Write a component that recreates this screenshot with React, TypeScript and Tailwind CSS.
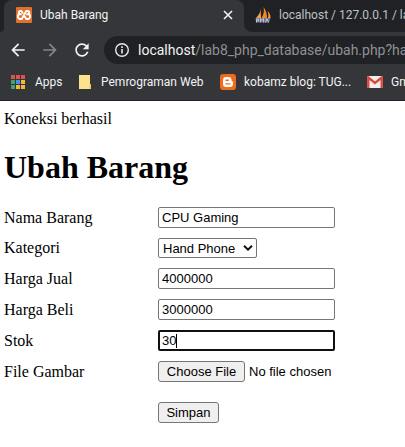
import type { ReactNode } from "react";

const uiFont = "font-['Roboto','Noto_Sans',sans-serif]";
const fieldClass =
  "block h-[21px] w-[177px] rounded-xs border border-[#767676] bg-white px-[3px] text-black outline-none";

function NavIcon({ label, path, dim }: { label: string; path: string; dim?: boolean }) {
  return (
    <button type="button" aria-label={label} className={dim ? "text-[#85868a]" : "text-[#f1f3f4]"}>
      <svg viewBox="0 0 24 24" className="size-5" fill="currentColor">
        <path d={path} />
      </svg>
    </button>
  );
}

function XamppIcon() {
  return (
    <svg viewBox="0 0 16 16" className="size-4 shrink-0">
      <rect width="16" height="16" rx="1" fill="#e0702a" />
      <g fill="none" stroke="#fff" strokeWidth="1.900" strokeLinejoin="round">
        <path d="M7 6.500L5.500 4H4.300a1.600 1.600 0 0 0-.8 3A2.600 2.600 0 0 0 4.500 12h1.300L10.200 4h1.500a1.600 1.600 0 0 1 .8 3 2.600 2.600 0 0 1-1 5h-1.300L8.500 9" />
        <path d="M3.500 7.200h2.200M12.500 7.200h-2.200" />
      </g>
    </svg>
  );
}

function PhpMyAdminIcon() {
  return (
    <svg viewBox="0 0 16 16" className="size-4 shrink-0">
      <path d="M5.500 1.500C5.500 5 4 8 1 11h5z" fill="#f6a440" />
      <path d="M8.500 0C9.500 4 8.500 8 6.500 11H12C12 7 11 3 8.500 0z" fill="#f08a1c" />
      <path d="M12.500 4c1 2 1.200 4.500.5 7h2.500C15.500 8 14.500 5.500 12.500 4z" fill="#f6a440" />
      <path d="M.5 11h15L14 15.500H1z" fill="#6f7290" />
      <path d="M1.500 15.500v-3.500h2v2h-2M5.500 15.500v-4l1.500 2 1.500-2v4M10.500 15.500l1.500-4 1.500 4" fill="none" stroke="#c3c6de" strokeWidth=".9" />
    </svg>
  );
}

const appColors = [
  "#e2504a", "#e2504a", "#e2504a",
  "#3fa073", "#4a90f0", "#f2b93b",
  "#3fa073", "#f2b93b", "#f2b93b",
];

function AppsIcon() {
  return (
    <svg viewBox="0 0 14 14" className="size-[14px] shrink-0">
      {appColors.map((color, i) => (
        <rect key={i} x={(i % 3) * 5} y={Math.floor(i / 3) * 5} width="4" height="4" fill={color} />
      ))}
    </svg>
  );
}

function NoteIcon() {
  return (
    <svg viewBox="0 0 12 15" className="h-[15px] w-3 shrink-0">
      <path d="M0 0h11v9l1 1v4H0z" fill="#fbe38e" />
      <path d="M11 9l1 1v4h-2v-3z" fill="#f4cf5c" />
    </svg>
  );
}

function BloggerIcon() {
  return (
    <svg viewBox="0 0 16 16" className="size-4 shrink-0">
      <rect width="16" height="16" rx="3" fill="#f26a1b" />
      <path
        fillRule="evenodd"
        fill="#fff"
        d="M6 3h2.500A3 3 0 0 1 11.500 6v.5q0 .7.8.7.7 0 .7.800V10a3 3 0 0 1-3 3H6a3 3 0 0 1-3-3V6a3 3 0 0 1 3-3zM6 5.500a.7.7 0 0 0 0 1.400h2.200a.7.7 0 0 0 0-1.400zM6 9.200a.7.7 0 0 0 0 1.400h4a.7.7 0 0 0 0-1.400z"
      />
    </svg>
  );
}

function GmailIcon() {
  return (
    <svg viewBox="0 0 16 12" className="h-3 w-4 shrink-0">
      <rect width="16" height="12" rx="1" fill="#f3eeee" />
      <path d="M1.250 12V1.500L8 7l6.750-5.500V12" fill="none" stroke="#dc4a3f" strokeWidth="2.400" />
    </svg>
  );
}

function Bookmark({ icon, children, className = "" }: { icon: ReactNode; children: ReactNode; className?: string }) {
  return (
    <a href="#" className={`flex shrink-0 items-center whitespace-nowrap ${className}`}>
      {icon}
      <span>{children}</span>
    </a>
  );
}

function BrowserBar() {
  return (
    <header className={`overflow-hidden border-b border-[#222325] bg-[#35363a] text-xs text-[#f1f3f4] ${uiFont}`}>
      <div className="flex h-8">
        <div className="w-1 shrink-0 rounded-br-lg bg-[#202124]" />
        <div className="shrink-0 bg-[#202124] w-60">
          <div className="flex h-8 items-center gap-2 rounded-t-lg bg-[#35363a] pr-2 pb-0.5 pl-3">
            <XamppIcon />
            <span className="flex-1">Ubah Barang</span>
            <button type="button" aria-label="Close tab">
              <svg viewBox="0 0 16 16" className="size-4" stroke="currentColor" strokeWidth="1.600">
                <path d="M4 4l8 8M12 4l-8 8" />
              </svg>
            </button>
          </div>
        </div>
        <div className="flex flex-1 items-center gap-2 overflow-hidden rounded-bl-lg bg-[#202124] pb-0.5 pl-[11px] whitespace-nowrap text-[#bdc1c6]">
          <PhpMyAdminIcon />
          <span>localhost / 127.0.0.1 / lab8</span>
        </div>
      </div>
      <div className="flex h-9 items-center">
        <nav className="flex w-26 shrink-0 items-center gap-3 pl-2">
          <NavIcon label="Back" path="M20 11H7.830l5.590-5.590L12 4l-8 8 8 8 1.410-1.410L7.830 13H20v-2z" />
          <NavIcon label="Forward" dim path="M12 4l-1.410 1.410L16.170 11H4v2h12.170l-5.580 5.590L12 20l8-8z" />
          <NavIcon
            label="Reload"
            path="M17.650 6.350C16.200 4.900 14.210 4 12 4c-4.420 0-7.990 3.580-7.990 8s3.570 8 7.990 8c3.730 0 6.840-2.550 7.730-6h-2.080c-.82 2.330-3.040 4-5.650 4-3.310 0-6-2.690-6-6s2.690-6 6-6c1.660 0 3.140.69 4.220 1.780L13 11h7V4l-2.350 2.350z"
          />
        </nav>
        <div className="flex h-7 flex-1 items-center gap-2 overflow-hidden rounded-l-full bg-[#202124] pl-[10px] text-sm whitespace-nowrap text-[#8e9195]">
          <svg viewBox="0 0 16 16" className="size-4 shrink-0 text-[#e8eaed]" fill="none" stroke="currentColor">
            <circle cx="8" cy="8" r="6.300" strokeWidth="1.400" />
            <path d="M8 7v4.500M8 4.300v1.700" strokeWidth="1.600" />
          </svg>
          <span>
            <span className="text-[#f1f3f4]">localhost</span>/lab8_php_database/ubah.php?hal
          </span>
        </div>
      </div>
      <div className="flex h-8 items-center pb-1 pl-[11px]">
        <Bookmark icon={<AppsIcon />} className="w-17 gap-[10px]">Apps</Bookmark>
        <Bookmark icon={<NoteIcon />} className="w-[141px] gap-[10px]">Pemrograman Web</Bookmark>
        <Bookmark icon={<BloggerIcon />} className="w-[147px] gap-2">kobamz blog: TUG...</Bookmark>
        <Bookmark icon={<GmailIcon />} className="gap-2">Gmail</Bookmark>
      </div>
    </header>
  );
}

function Row({ id, label, children }: { id: string; label: string; children: ReactNode }) {
  return (
    <div className="flex items-center">
      <label htmlFor={id} className="w-[154px] shrink-0 font-['Liberation_Serif',serif] text-base leading-5">
        {label}
      </label>
      {children}
    </div>
  );
}

export default function App() {
  return (
    <div className="min-h-screen overflow-hidden bg-white text-black">
      <BrowserBar />
      <main className="px-1 pt-2 font-['Liberation_Serif',serif]">
        <p className="text-base leading-5">Koneksi berhasil</p>
        <h1 className="mt-5 text-[32px] leading-9 font-bold">Ubah Barang</h1>
        <form
          className="mt-[22px] flex flex-col gap-[10px] font-['Liberation_Sans',sans-serif] text-[13px]"
          onSubmit={(e) => e.preventDefault()}
        >
          <Row id="nama" label="Nama Barang">
            <input id="nama" type="text" defaultValue="CPU Gaming" className={fieldClass} />
          </Row>
          <Row id="kategori" label="Kategori">
            <div className="relative">
              <select
                id="kategori"
                className="block h-5 w-[99px] appearance-none rounded-xs border border-[#767676] bg-white pl-1 text-black"
              >
                <option>Hand Phone</option>
              </select>
              <svg
                viewBox="0 0 10 6"
                className="pointer-events-none absolute top-[7px] right-1 h-[6px] w-[10px]"
                fill="none"
                stroke="#111"
                strokeWidth="2"
              >
                <path d="M1 .8L5 4.600 9 .8" />
              </svg>
            </div>
          </Row>
          <Row id="jual" label="Harga Jual">
            <input id="jual" type="text" defaultValue="4000000" className={fieldClass} />
          </Row>
          <Row id="beli" label="Harga Beli">
            <input id="beli" type="text" defaultValue="3000000" className={fieldClass} />
          </Row>
          <Row id="stok" label="Stok">
            <div className="relative">
              <input
                id="stok"
                type="text"
                defaultValue="30"
                className="block h-[21px] w-[177px] rounded-xs border-2 border-[#101010] bg-white px-[2px] text-black caret-transparent outline-none"
              />
              <span className="absolute top-1 left-[18px] h-[14px] w-px bg-black" />
            </div>
          </Row>
          <Row id="gambar" label="File Gambar">
            <input
              id="gambar"
              type="file"
              className="block h-[21px] file:me-1 file:h-[21px] file:w-[87px] file:rounded-[3px] file:border file:border-solid file:border-[#767676] file:bg-[#efefef] file:p-0 file:text-black"
            />
          </Row>
          <button
            type="submit"
            className="mt-[10px] ml-[154px] h-[21px] w-[61px] rounded-[3px] border border-[#767676] bg-[#efefef]"
          >
            Simpan
          </button>
        </form>
      </main>
    </div>
  );
}
